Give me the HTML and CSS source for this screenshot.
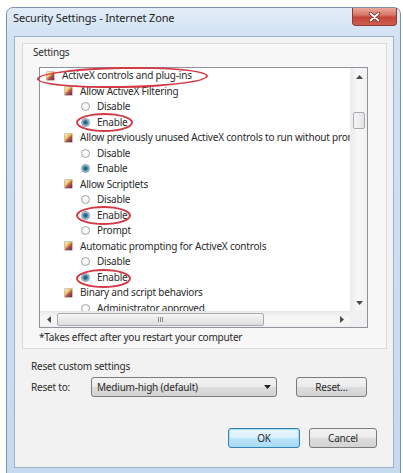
FILE: index.html
```html
<!DOCTYPE html>
<html>
<head>
<meta charset="utf-8">
<title>Security Settings - Internet Zone</title>
<link rel="stylesheet" href="styles.css">
</head>
<body>
<div class="window">
  <div class="titlebar">
    <span class="title">Security Settings - Internet Zone</span>
    <div class="close">
      <svg width="13" height="10" viewBox="0 0 13 10"><path d="M2.5 1.5 L10.5 8.5 M10.5 1.5 L2.5 8.5" stroke="#7d2a22" stroke-width="3.4" stroke-linecap="round"/><path d="M2.5 1.5 L10.5 8.5 M10.5 1.5 L2.5 8.5" stroke="#fff" stroke-width="1.8" stroke-linecap="round"/></svg>
    </div>
  </div>
  <div class="client">
    <div class="panel">
      <div class="settings-label">Settings</div>
      <div class="listbox">
        <div class="tree">
          <div class="row l0"><span class="ico"></span>ActiveX controls and plug-ins</div>
          <div class="row l1"><span class="ico"></span>Allow ActiveX Filtering</div>
          <div class="row l2"><span class="radio"></span>Disable</div>
          <div class="row l2"><span class="radio on"></span>Enable</div>
          <div class="row l1"><span class="ico"></span>Allow previously unused ActiveX controls to run without prompting</div>
          <div class="row l2"><span class="radio"></span>Disable</div>
          <div class="row l2"><span class="radio on"></span>Enable</div>
          <div class="row l1"><span class="ico"></span>Allow Scriptlets</div>
          <div class="row l2"><span class="radio"></span>Disable</div>
          <div class="row l2"><span class="radio on"></span>Enable</div>
          <div class="row l2"><span class="radio"></span>Prompt</div>
          <div class="row l1"><span class="ico"></span>Automatic prompting for ActiveX controls</div>
          <div class="row l2"><span class="radio"></span>Disable</div>
          <div class="row l2"><span class="radio on"></span>Enable</div>
          <div class="row l1"><span class="ico"></span>Binary and script behaviors</div>
          <div class="row l2"><span class="radio"></span>Administrator approved</div>
        </div>
        <div class="vscroll">
          <div class="sb-btn"><svg width="7" height="4" viewBox="0 0 7 4"><path d="M0 4 L3.5 0 L7 4z" fill="#4a4a4a"/></svg></div>
          <div class="vthumb"></div>
          <div class="sb-fill"></div>
          <div class="sb-btn"><svg width="7" height="4" viewBox="0 0 7 4"><path d="M0 0 L3.5 4 L7 0z" fill="#4a4a4a"/></svg></div>
        </div>
        <div class="hscroll">
          <div class="sb-btn h"><svg width="4" height="7" viewBox="0 0 4 7"><path d="M4 0 L0 3.5 L4 7z" fill="#4a4a4a"/></svg></div>
          <div class="hthumb"><span class="grip"></span></div>
          <div class="sb-fill"></div>
          <div class="sb-btn h"><svg width="4" height="7" viewBox="0 0 4 7"><path d="M0 0 L4 3.5 L0 7z" fill="#4a4a4a"/></svg></div>
        </div>
        <div class="corner"></div>
        <div class="mark m1"></div>
        <div class="mark m2"></div>
        <div class="mark m3"></div>
        <div class="mark m4"></div>
      </div>
      <div class="note">*Takes effect after you restart your computer</div>
    </div>
    <div class="reset">
      <div class="reset-label">Reset custom settings</div>
      <div class="reset-row">
        <span class="reset-to">Reset to:</span>
        <div class="combo">
          <span>Medium-high (default)</span>
          <svg width="7" height="4" viewBox="0 0 7 4"><path d="M0 0 L3.5 4 L7 0z" fill="#222"/></svg>
        </div>
        <button class="btn reset-btn">Reset...</button>
      </div>
    </div>
    <div class="actions">
      <button class="btn ok">OK</button>
      <button class="btn cancel">Cancel</button>
    </div>
  </div>
</div>
</body>
</html>
```
FILE: styles.css
```css
html, body {
  margin: 0;
  padding: 0;
  background: #ffffff;
}
body {
  width: 403px;
  height: 473px;
  overflow: hidden;
  font-family: "Noto Sans", "DejaVu Sans", sans-serif;
  font-size: 10px;
  letter-spacing: -0.2px;
  color: #2a2a2a;
}

.window {
  box-sizing: border-box;
  margin: 7px 0 0 6px;
  width: 395px;
  height: 480px;
  border: 1px solid #7d94ad;
  border-radius: 7px 7px 0 0;
  background: linear-gradient(180deg, #e1ecf7 0, #d2e2f3 28px, #c6daef 100%);
  padding: 0 6px 0 7px;
  display: flex;
  flex-direction: column;
}

.titlebar {
  height: 28px;
  display: flex;
  align-items: flex-start;
  justify-content: space-between;
  flex: none;
}
.title {
  margin: 3px 0 0 -1px;
  font-size: 11px;
  letter-spacing: -0.15px;
  line-height: 14px;
  color: #1e1e1e;
}
.close {
  box-sizing: border-box;
  width: 45px;
  height: 18px;
  margin-right: -3px;
  border: 1px solid #8a3b33;
  border-top: none;
  border-radius: 0 0 4px 4px;
  background: linear-gradient(180deg, #e9a899 0, #d9796a 40%, #c4463a 55%, #cf5e4f 100%);
  display: flex;
  align-items: center;
  justify-content: center;
}

.client {
  box-sizing: border-box;
  height: 432px;
  flex: none;
  border: 1px solid #9fb2c8;
  background: #f2f2f2;
  display: flex;
  flex-direction: column;
}

.panel {
  box-sizing: border-box;
  margin: 6px 6px 0 7px;
  height: 306px;
  border: 1px solid #dadada;
  background: #f7f7f7;
  padding: 1px 0 0 16px;
}
.settings-label {
  line-height: 14px;
  margin-left: -6px;
}

.listbox {
  position: relative;
  box-sizing: border-box;
  margin-top: 8px;
  width: 329px;
  height: 261px;
  border: 1px solid #8e939b;
  background: #ffffff;
  display: grid;
  grid-template-columns: 310px 17px;
  grid-template-rows: 243px 16px;
}

.tree {
  overflow: hidden;
}
.row {
  height: 15.5px;
  line-height: 15.5px;
  display: flex;
  align-items: center;
  white-space: nowrap;
}
.row.l0 { padding-left: 6px; }
.row.l1 { padding-left: 24px; }
.row.l2 { padding-left: 41px; }

.ico {
  flex: none;
  box-sizing: border-box;
  width: 9px;
  height: 10px;
  margin-right: 7px;
  border: 1px solid #c9c2b8;
  border-radius: 1px;
  background: linear-gradient(135deg, #fff3c8 0%, #f0c458 38%, #b5544a 58%, #5d2b66 100%);
}
.radio {
  flex: none;
  box-sizing: border-box;
  width: 9px;
  height: 9px;
  margin-right: 7px;
  border: 1px solid #a2a6aa;
  border-radius: 50%;
  background: radial-gradient(circle at 50% 40%, #ffffff 0, #e9ebed 100%);
}
.radio.on {
  border-color: #7f97a6;
  background: radial-gradient(circle, #1d5c79 0, #2f7595 1.8px, #8bb6c9 3px, #e7eff3 4px);
}

.vscroll {
  grid-column: 2;
  grid-row: 1;
  background: linear-gradient(90deg, #ececec, #f7f7f7 40%, #f1f1f1);
  border-left: 1px solid #eeeeee;
  display: flex;
  flex-direction: column;
}
.sb-btn {
  flex: none;
  height: 17px;
  display: flex;
  align-items: center;
  justify-content: center;
}
.sb-btn.h {
  height: auto;
  width: 17px;
}
.sb-fill {
  flex: 1;
}
.vthumb {
  flex: none;
  box-sizing: border-box;
  margin: 27px 0 0 2px;
  width: 12px;
  height: 17px;
  border: 1px solid #a9acaf;
  border-radius: 2px;
  background: linear-gradient(90deg, #f5f5f5, #e4e4e4);
}

.hscroll {
  grid-column: 1;
  grid-row: 2;
  background: linear-gradient(180deg, #ececec, #f7f7f7 40%, #f1f1f1);
  border-top: 1px solid #e6e6e6;
  display: flex;
}
.hthumb {
  flex: none;
  box-sizing: border-box;
  margin: 1px 0;
  width: 207px;
  border: 1px solid #a9acaf;
  border-radius: 2px;
  background: linear-gradient(180deg, #f6f6f6, #dedede);
  display: flex;
  align-items: center;
  justify-content: center;
}
.grip {
  width: 5px;
  height: 5px;
  background: repeating-linear-gradient(90deg, #8a8a8a 0 1px, transparent 1px 2px);
}
.corner {
  grid-column: 2;
  grid-row: 2;
  background: #f0f0f0;
}

.mark {
  position: absolute;
  box-sizing: border-box;
  border: 2px solid #d23a46;
  border-radius: 50%;
}
.m1 { left: -3px; top: -1px; width: 171px; height: 21px; transform: rotate(-1deg); }
.m2 { left: 36px; top: 45px; width: 57px; height: 19px; }
.m3 { left: 36px; top: 138px; width: 55px; height: 19px; }
.m4 { left: 36px; top: 201px; width: 55px; height: 19px; }

.note {
  margin-top: 2px;
  line-height: 14px;
}

.reset {
  padding-left: 16px;
}
.reset-label {
  margin-top: 10px;
  line-height: 14px;
}
.reset-row {
  margin-top: 4px;
  height: 20px;
  display: flex;
  align-items: center;
}
.reset-to {
  width: 60px;
  flex: none;
}
.combo {
  box-sizing: border-box;
  width: 186px;
  height: 20px;
  border: 1px solid #7a7a7a;
  border-radius: 3px;
  background: linear-gradient(180deg, #f3f3f3 0, #ebebeb 50%, #dddddd 51%, #d3d3d3 100%);
  display: flex;
  align-items: center;
  justify-content: space-between;
  padding: 0 5px 0 5px;
}
.btn {
  box-sizing: border-box;
  height: 20px;
  padding: 0;
  font-family: inherit;
  font-size: 10px;
  letter-spacing: -0.2px;
  color: #2a2a2a;
  border: 1px solid #7a7a7a;
  border-radius: 3px;
  background: linear-gradient(180deg, #f3f3f3 0, #ebebeb 50%, #dddddd 51%, #d3d3d3 100%);
}
.reset-btn {
  margin-left: 19px;
  width: 71px;
}

.actions {
  margin-top: 31px;
  padding-right: 16px;
  display: flex;
  justify-content: flex-end;
  gap: 9px;
}
.ok {
  width: 72px;
  border-color: #3c7fb1;
  box-shadow: inset 0 0 0 1px #9fe0f5;
  background: linear-gradient(180deg, #eaf6fd 0, #d9f0fc 50%, #bee6fd 51%, #a7d9f5 100%);
}
.cancel {
  width: 68px;
}
```
